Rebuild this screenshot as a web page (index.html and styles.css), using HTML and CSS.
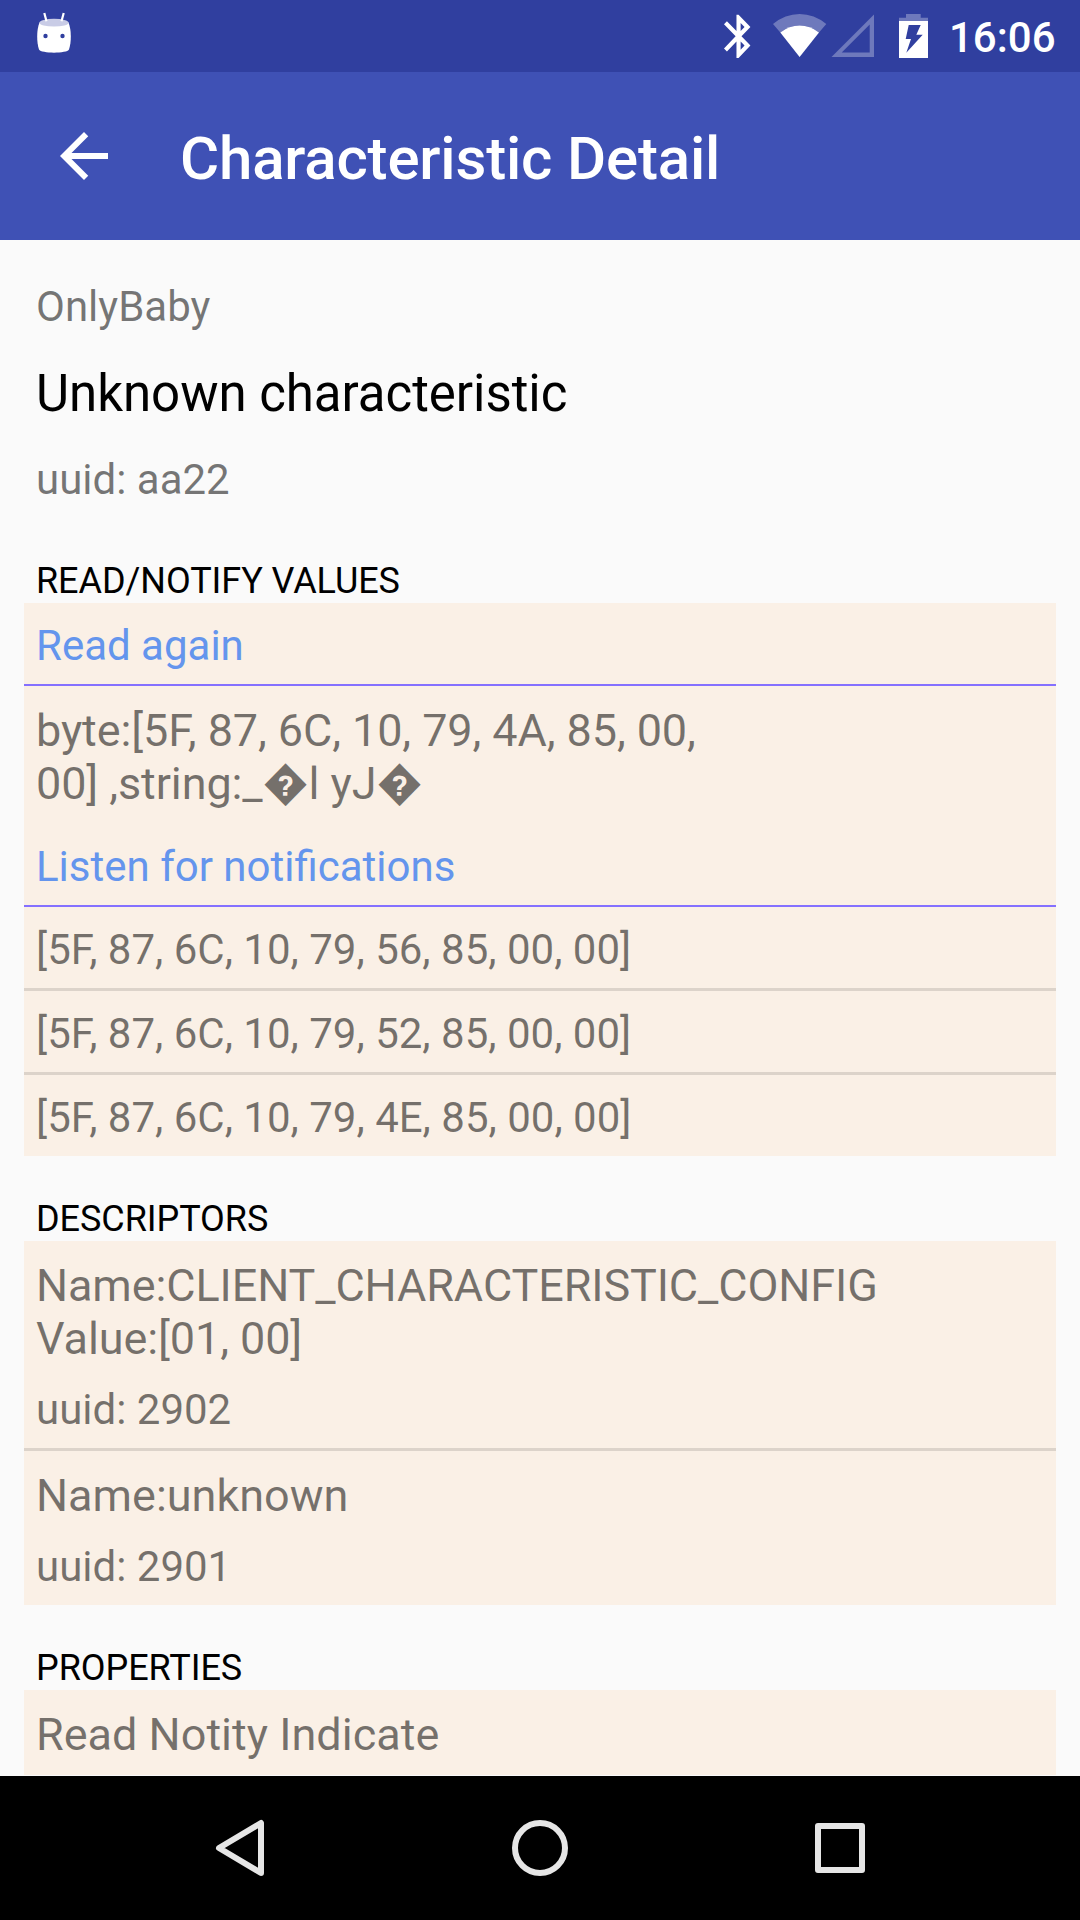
FILE: index.html
```html
<!DOCTYPE html>
<html lang="en">
<head>
<meta charset="utf-8">
<title>Characteristic Detail</title>
<link rel="stylesheet" href="styles.css">
</head>
<body>
<div class="screen">
  <div class="status-bar">
    <svg class="icon-debug" width="36" height="42" viewBox="36 12 36 42">
      <path d="M39.500 22.500C36.500 30 36.500 42 39 49.500C41 53.700 67 53.700 69 49.500C71.500 42 71.500 30 68.500 22.500Z" fill="#fff"/>
      <ellipse cx="54" cy="22.700" rx="14.600" ry="3.900" fill="#c9cce6"/>
      <path d="M44.300 13L46.500 21.300M63.700 13L61.500 21.300" stroke="#fff" stroke-width="2.200" fill="none"/>
      <circle cx="45.500" cy="36" r="2.200" fill="#303f9f"/>
      <circle cx="62.500" cy="36" r="2.200" fill="#303f9f"/>
    </svg>
    <div class="status-right">
      <svg class="icon-status" width="214" height="46" viewBox="720 13 214 46" fill="#fff">
        <path transform="translate(713.600 10.300) scale(2.080 2.167)" d="M17.710 7.710L12 2h-1v7.590L6.410 5 5 6.410 10.590 12 5 17.590 6.410 19 11 14.410V22h1l5.710-5.710-4.300-4.290 4.300-4.290zM13 5.830l1.880 1.880L13 9.590V5.830zm1.880 10.460L13 18.170v-3.760l1.880 1.880z"/>
        <path opacity=".3" d="M780.300 32.500L773 24Q785 14 799.600 14T826.300 24L819 32.500Q810 25.500 799.600 25.500T780.300 32.500Z"/>
        <path d="M799.600 57L780.300 32.500Q789 25.500 799.600 25.500T819 32.500Z"/>
        <path opacity=".3" fill-rule="evenodd" d="M831.500 57H874V14.500ZM841.700 52.500H869.700V24.500Z"/>
        <path opacity=".3" d="M906 14H920.700V17.700H928V21H899V17.700H906Z"/>
        <path fill-rule="evenodd" d="M899 21H928V58H899ZM908.700 25L905.700 39H911L906.300 52.700L922.700 34.700H916.300L920.700 25Z"/>
      </svg>
      <span class="clock">16:06</span>
    </div>
  </div>
  <header class="toolbar">
    <svg class="icon-back" width="72" height="72" viewBox="0 0 24 24"><path fill="#fff" d="M20 11H7.830l5.590-5.590L12 4l-8 8 8 8 1.410-1.410L7.830 13H20v-2z"/></svg>
    <h1 class="title">Characteristic Detail</h1>
  </header>
  <main class="content">
    <div class="summary">
      <p class="body">OnlyBaby</p>
      <h2 class="name">Unknown characteristic</h2>
      <p class="body">uuid: aa22</p>
    </div>
    <h3 class="section">READ/NOTIFY VALUES</h3>
    <div class="panel">
      <div class="row action">Read again</div>
      <div class="row large tight">byte:[5F, 87, 6C, 10, 79, 4A, 85, 00,<br>00] ,string:_�l yJ�</div>
      <div class="row action">Listen for notifications</div>
      <div class="row divided">[5F, 87, 6C, 10, 79, 56, 85, 00, 00]</div>
      <div class="row divided">[5F, 87, 6C, 10, 79, 52, 85, 00, 00]</div>
      <div class="row">[5F, 87, 6C, 10, 79, 4E, 85, 00, 00]</div>
    </div>
    <h3 class="section">DESCRIPTORS</h3>
    <div class="panel">
      <div class="row divided descriptor">
        <div class="large tight">Name:CLIENT_CHARACTERISTIC_CONFIG<br>Value:[01, 00]</div>
        <div>uuid: 2902</div>
      </div>
      <div class="row descriptor">
        <div class="large">Name:unknown</div>
        <div>uuid: 2901</div>
      </div>
    </div>
    <h3 class="section">PROPERTIES</h3>
    <div class="panel">
      <div class="row large">Read Notity Indicate</div>
    </div>
  </main>
  <nav class="nav-bar">
    <svg width="60" height="60" viewBox="0 0 60 60"><path d="M51 5V55L9 30Z"/></svg>
    <svg width="60" height="60" viewBox="0 0 60 60"><circle cx="30" cy="30" r="25"/></svg>
    <svg width="60" height="60" viewBox="0 0 60 60"><rect x="8" y="8" width="44" height="44"/></svg>
  </nav>
</div>
</body>
</html>
```
FILE: styles.css
```css
* {
  box-sizing: border-box;
  margin: 0;
  padding: 0;
}

body {
  background: #fafafa;
  font-family: Roboto, "Noto Sans", sans-serif;
}

svg {
  display: block;
  flex: none;
}

.screen {
  display: flex;
  flex-direction: column;
  width: 1080px;
  height: 1920px;
  overflow: hidden;
}

.status-bar {
  display: flex;
  justify-content: space-between;
  flex: none;
  height: 72px;
  padding: 12px 24px 0 36px;
  background: #303f9f;
  color: #fff;
}

.status-right {
  display: flex;
}

.icon-status {
  margin: 1px 15px 0 0;
}

.clock {
  width: 107px;
  margin-top: 1px;
  font-size: 42px;
  font-weight: 500;
  line-height: 49px;
  white-space: nowrap;
}

.toolbar {
  display: flex;
  flex: none;
  gap: 60px;
  height: 168px;
  padding: 48px 48px 0;
  background: #3f51b5;
  color: #fff;
}

.title {
  margin-top: 3px;
  font-size: 60px;
  font-weight: 500;
  line-height: 71px;
  letter-spacing: -.18px;
  white-space: nowrap;
}

.content {
  flex: 1;
  min-height: 0;
  padding: 42px 24px 0;
  overflow: hidden;
  color: rgba(0, 0, 0, .54);
  font-size: 42px;
  line-height: 49px;
}

.summary {
  display: flex;
  flex-direction: column;
  padding: 0 12px 14px;
}

.name {
  margin: 33px 0 32px;
  color: #000;
  font-size: 51px;
  font-weight: 400;
  line-height: 59px;
  letter-spacing: -.04px;
}

.section {
  margin: 42px 0 1px;
  padding-left: 12px;
  color: #000;
  font-size: 36px;
  font-weight: 400;
  line-height: 42px;
  letter-spacing: -.06px;
}

.panel {
  background: #faf0e6;
}

.row {
  padding: 18px 12px 14px;
}

.action {
  border-bottom: 2px solid #8470ff;
  color: #6495ed;
}

.divided {
  border-bottom: 3px solid #dcd3ca;
}

.large {
  font-size: 45px;
  line-height: 53px;
}

.tight {
  letter-spacing: -.11px;
}

.descriptor {
  display: flex;
  flex-direction: column;
  gap: 20px;
}

.nav-bar {
  display: flex;
  flex: none;
  justify-content: space-between;
  align-items: center;
  height: 144px;
  padding: 0 210px;
  background: #000;
}

.nav-bar svg {
  fill: none;
  stroke: #e6e6e6;
  stroke-width: 6;
  stroke-linejoin: round;
}
```
